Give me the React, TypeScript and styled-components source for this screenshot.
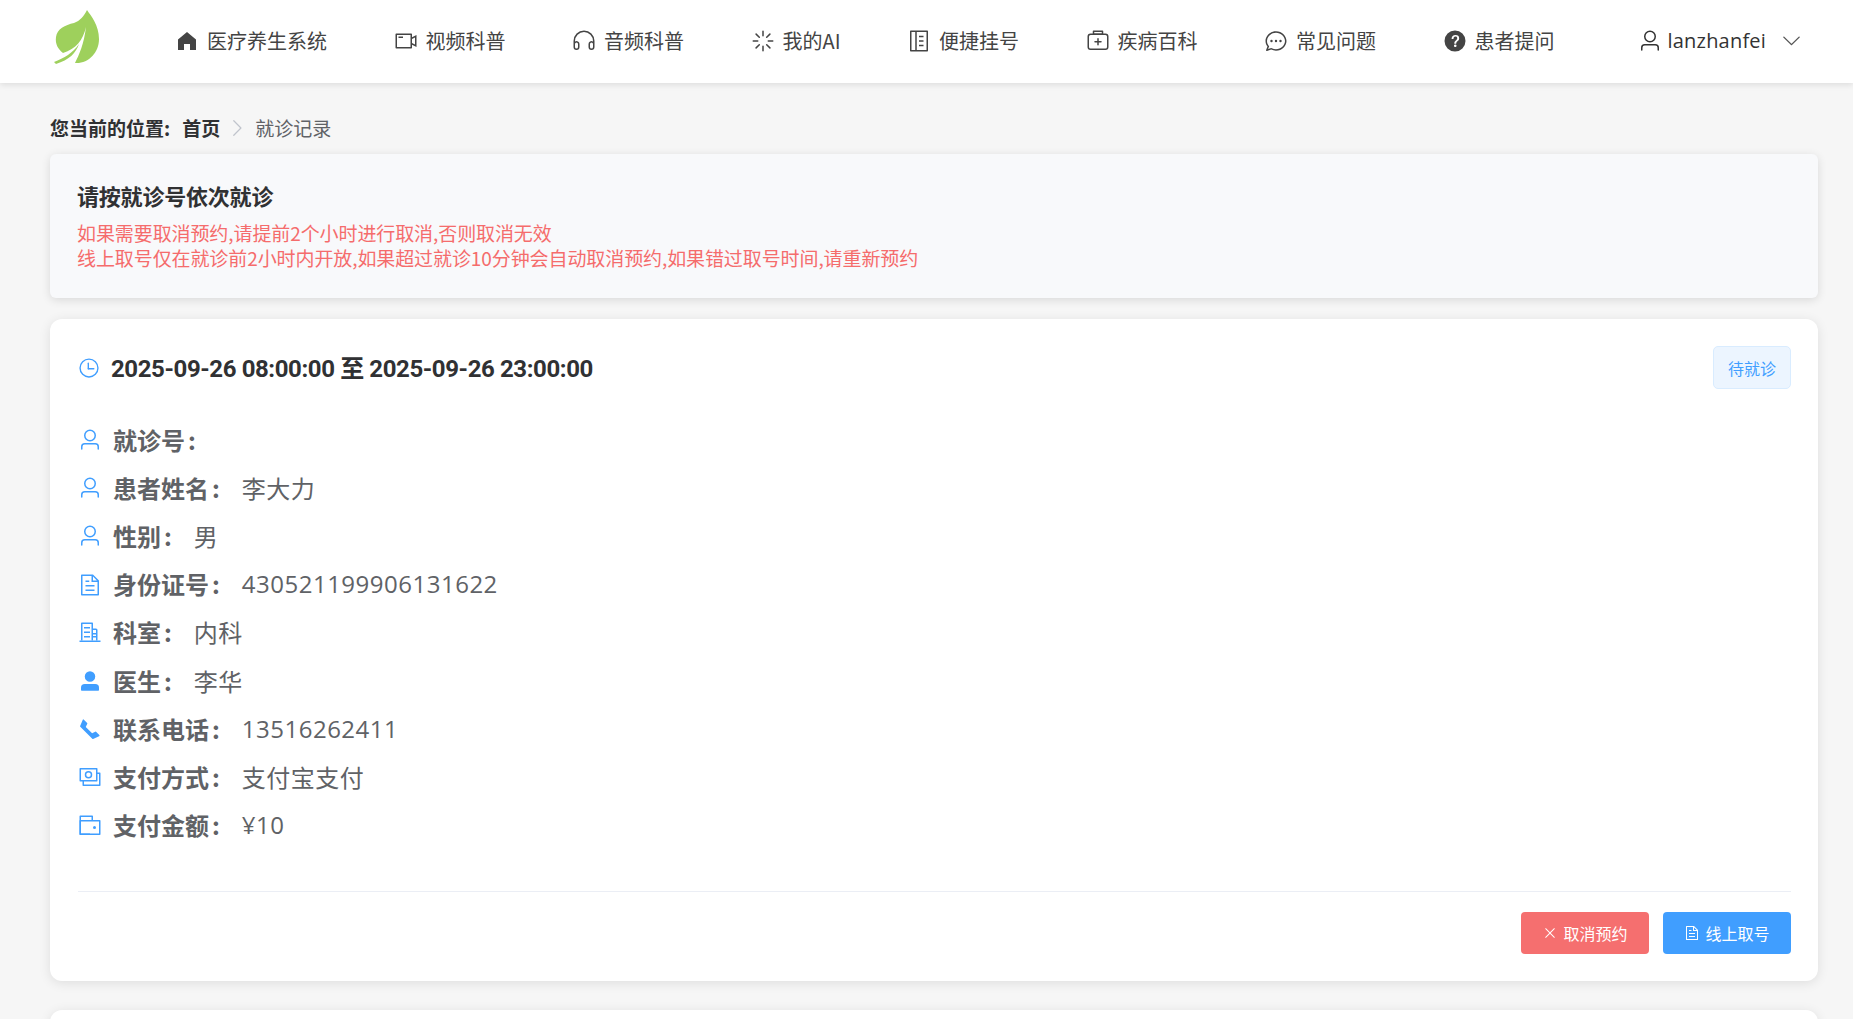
import styled, { createGlobalStyle } from "styled-components"

const GlobalStyle = createGlobalStyle`
    html, body {
        margin: 0;
        height: 100%;
        overflow: hidden;
        background: #f6f6f6;
        font-family: "Noto Sans CJK SC", "Open Sans", sans-serif;
    }
    * { box-sizing: border-box; }
`

const paths = {
    home: ["M512 128 128 447.936V896h255.936V640H640v256h255.936V447.936z"],
    video: ["M704 768V256H128v512zm64-416 192-96v512l-192-96v128a32 32 0 0 1-32 32H96a32 32 0 0 1-32-32V224a32 32 0 0 1 32-32h640a32 32 0 0 1 32 32zm0 71.552v176.896l128 64V359.552zM192 320h192v64H192z"],
    headset: ["M896 529.152V512a384 384 0 1 0-768 0v17.152A128 128 0 0 1 320 640v128a128 128 0 1 1-256 0V512a448 448 0 1 1 896 0v256a128 128 0 1 1-256 0V640a128 128 0 0 1 192-110.848M896 640a64 64 0 0 0-128 0v128a64 64 0 0 0 128 0zm-768 0v128a64 64 0 0 0 128 0V640a64 64 0 1 0-128 0"],
    loading: ["M512 64a32 32 0 0 1 32 32v192a32 32 0 0 1-64 0V96a32 32 0 0 1 32-32m0 640a32 32 0 0 1 32 32v192a32 32 0 1 1-64 0V736a32 32 0 0 1 32-32m448-192a32 32 0 0 1-32 32H736a32 32 0 1 1 0-64h192a32 32 0 0 1 32 32m-640 0a32 32 0 0 1-32 32H96a32 32 0 0 1 0-64h192a32 32 0 0 1 32 32M195.2 195.2a32 32 0 0 1 45.248 0l135.872 135.808a32 32 0 0 1-45.248 45.248L195.2 240.448a32 32 0 0 1 0-45.248zm452.544 452.544a32 32 0 0 1 45.248 0L828.8 783.552a32 32 0 0 1-45.248 45.248L647.744 692.992a32 32 0 0 1 0-45.248zM828.8 195.264a32 32 0 0 1 0 45.184L692.992 376.32a32 32 0 0 1-45.248-45.248l135.808-135.808a32 32 0 0 1 45.248 0m-452.544 452.48a32 32 0 0 1 0 45.248L240.448 828.8a32 32 0 0 1-45.248-45.248l135.808-135.808a32 32 0 0 1 45.248 0z"],
    notebook: ["M192 128v768h640V128zm-32-64h704a32 32 0 0 1 32 32v832a32 32 0 0 1-32 32H160a32 32 0 0 1-32-32V96a32 32 0 0 1 32-32", "M352 96h64v832h-64zM512 288h192v64H512zm0 192h192v64H512zm0 192h192v64H512z"],
    kit: [
        "M192 256a64 64 0 0 0-64 64v448a64 64 0 0 0 64 64h640a64 64 0 0 0 64-64V320a64 64 0 0 0-64-64zm0-64h640a128 128 0 0 1 128 128v448a128 128 0 0 1-128 128H192A128 128 0 0 1 64 768V320a128 128 0 0 1 128-128",
        "M544 512h96a32 32 0 0 1 0 64h-96v96a32 32 0 0 1-64 0v-96h-96a32 32 0 0 1 0-64h96v-96a32 32 0 0 1 64 0zM352 128v64h320v-64zm-32-64h384a32 32 0 0 1 32 32v128a32 32 0 0 1-32 32H320a32 32 0 0 1-32-32V96a32 32 0 0 1 32-32",
    ],
    chat: [
        "m174.72 855.68 135.296-45.12 23.68 11.84C388.096 849.536 448.576 864 512 864c211.84 0 384-166.784 384-352S723.84 160 512 160 128 326.784 128 512c0 69.12 24.96 139.264 70.848 199.232l22.08 28.8-46.272 115.584zm-45.248 82.56A32 32 0 0 1 89.6 896l58.368-145.92C94.72 680.32 64 596.864 64 512 64 299.904 256 96 512 96s448 203.904 448 416-192 416-448 416a461.056 461.056 0 0 1-206.912-48.384l-175.616 58.56z",
        "M512 563.2a51.2 51.2 0 1 1 0-102.4 51.2 51.2 0 0 1 0 102.4m192 0a51.2 51.2 0 1 1 0-102.4 51.2 51.2 0 0 1 0 102.4m-384 0a51.2 51.2 0 1 1 0-102.4 51.2 51.2 0 0 1 0 102.4",
    ],
    question: ["M512 64a448 448 0 1 1 0 896 448 448 0 0 1 0-896m23.744 191.488c-52.096 0-92.928 14.784-123.2 44.352-30.976 29.568-45.76 70.4-45.76 122.496h80.256c0-29.568 5.632-52.8 17.6-68.992 13.376-19.712 35.2-28.864 66.176-28.864 23.936 0 42.944 6.336 56.32 19.712 12.672 13.376 19.712 31.68 19.712 54.912 0 17.6-6.336 34.496-19.008 49.984l-8.448 9.856c-45.76 40.832-73.216 70.4-82.368 89.408-9.856 19.008-14.08 42.24-14.08 68.992v9.856h80.96v-9.856c0-16.896 3.52-31.68 10.56-45.76 6.336-12.672 15.488-24.64 28.16-35.2 33.792-29.568 54.208-48.576 60.544-55.616 16.896-22.528 26.048-51.392 26.048-86.592 0-42.944-14.08-76.736-42.24-101.376-28.16-25.344-65.472-37.312-111.232-37.312zm-12.672 406.208a54.272 54.272 0 0 0-38.72 14.784 49.408 49.408 0 0 0-15.488 38.016c0 15.488 4.928 28.16 15.488 38.016A54.848 54.848 0 0 0 523.072 768c15.488 0 28.16-4.928 38.72-14.784a51.52 51.52 0 0 0 16.192-38.72 51.968 51.968 0 0 0-15.488-38.016 55.936 55.936 0 0 0-39.424-14.784z"],
    user: ["M512 512a192 192 0 1 0 0-384 192 192 0 0 0 0 384m0 64a256 256 0 1 1 0-512 256 256 0 0 1 0 512m320 320v-96a96 96 0 0 0-96-96H288a96 96 0 0 0-96 96v96a32 32 0 1 1-64 0v-96a160 160 0 0 1 160-160h448a160 160 0 0 1 160 160v96a32 32 0 1 1-64 0"],
    arrowDown: ["M831.872 340.864 512 652.672 192.128 340.864a30.592 30.592 0 0 0-42.752 0 29.12 29.12 0 0 0 0 41.6L489.664 714.24a32 32 0 0 0 44.672 0l340.288-331.712a29.12 29.12 0 0 0 0-41.728 30.592 30.592 0 0 0-42.752 0z"],
    arrowRight: ["M340.864 149.312a30.592 30.592 0 0 0 0 42.752L652.736 512 340.864 831.872a30.592 30.592 0 0 0 0 42.752 29.12 29.12 0 0 0 41.728 0L714.24 534.336a32 32 0 0 0 0-44.672L382.592 149.376a29.12 29.12 0 0 0-41.728 0z"],
    clock: [
        "M512 896a384 384 0 1 0 0-768 384 384 0 0 0 0 768m0 64a448 448 0 1 1 0-896 448 448 0 0 1 0 896",
        "M480 256a32 32 0 0 1 32 32v256a32 32 0 0 1-64 0V288a32 32 0 0 1 32-32",
        "M480 512h256q32 0 32 32t-32 32H480q-32 0-32-32t32-32",
    ],
    document: ["M832 384H576V128H192v768h640zm-26.496-64L640 154.496V320zM160 64h480l256 256v608a32 32 0 0 1-32 32H160a32 32 0 0 1-32-32V96a32 32 0 0 1 32-32m160 448h384v64H320zm0-192h160v64H320zm0 384h384v64H320z"],
    office: [
        "M192 128v704h384V128zm-32-64h448a32 32 0 0 1 32 32v736h-512V96a32 32 0 0 1 32-32",
        "M256 256h256v64H256zm0 192h256v64H256zm0 192h256v64H256zm384-128h128v64H640zm0 128h128v64H640zM768 384H640v-64h128a64 64 0 0 1 64 64v448h-64z",
        "M64 832h896v64H64z",
    ],
    userFilled: ["M288 320a224 224 0 1 0 448 0 224 224 0 1 0-448 0m544 608H160a32 32 0 0 1-32-32v-96a160 160 0 0 1 160-160h448a160 160 0 0 1 160 160v96a32 32 0 0 1-32 32z"],
    phone: ["M199.232 125.568 90.624 379.008a32 32 0 0 0 6.784 35.2l512.384 512.384a32 32 0 0 0 35.2 6.784l253.44-108.608a32 32 0 0 0 10.048-52.032L769.6 633.92a32 32 0 0 0-36.928-5.952l-130.176 65.088-271.488-271.552 65.024-130.176a32 32 0 0 0-5.952-36.928L251.2 115.52a32 32 0 0 0-51.968 10.048z"],
    money: [
        "M256 640v192h640V384H768v-64h150.976c14.272 0 19.456 1.472 24.64 4.288a29.056 29.056 0 0 1 12.16 12.096c2.752 5.184 4.224 10.368 4.224 24.64v493.952c0 14.272-1.472 19.456-4.288 24.64a29.056 29.056 0 0 1-12.096 12.16c-5.184 2.752-10.368 4.224-24.64 4.224H233.024c-14.272 0-19.456-1.472-24.64-4.288a29.056 29.056 0 0 1-12.16-12.096c-2.688-5.184-4.224-10.368-4.224-24.576V640z",
        "M768 192H128v448h640zm64-22.976v493.952c0 14.272-1.472 19.456-4.288 24.64a29.056 29.056 0 0 1-12.096 12.16c-5.184 2.752-10.368 4.224-24.64 4.224H105.024c-14.272 0-19.456-1.472-24.64-4.288a29.056 29.056 0 0 1-12.16-12.096C65.536 682.432 64 677.248 64 663.04V169.024c0-14.272 1.472-19.456 4.288-24.64a29.056 29.056 0 0 1 12.096-12.16C85.568 129.536 90.752 128 104.96 128h685.952c14.272 0 19.456 1.472 24.64 4.288a29.056 29.056 0 0 1 12.16 12.096c2.752 5.184 4.224 10.368 4.224 24.64z",
        "M448 576a160 160 0 1 1 0-320 160 160 0 0 1 0 320m0-64a96 96 0 1 0 0-192 96 96 0 0 0 0 192",
    ],
    wallet: [
        "M640 288h-64V128H128v704h384v32a32 32 0 0 0 32 32H96a32 32 0 0 1-32-32V96a32 32 0 0 1 32-32h512a32 32 0 0 1 32 32z",
        "M128 320v512h768V320zm-32-64h832a32 32 0 0 1 32 32v576a32 32 0 0 1-32 32H96a32 32 0 0 1-32-32V288a32 32 0 0 1 32-32",
        "M704 640a64 64 0 1 1 0-128 64 64 0 0 1 0 128",
    ],
    close: ["M764.288 214.592 512 466.88 259.712 214.592a31.936 31.936 0 0 0-45.12 45.12L466.752 512 214.528 764.224a31.936 31.936 0 1 0 45.12 45.184L512 557.184l252.288 252.288a31.936 31.936 0 0 0 45.12-45.12L557.12 512.064l252.288-252.352a31.936 31.936 0 1 0-45.12-45.184z"],
}

type IconName = keyof typeof paths

const IconSvg = styled.svg<{ $size: number }>`
    width: ${props => props.$size}px;
    height: ${props => props.$size}px;
    flex-shrink: 0;
    fill: currentColor;
`

const Icon = (props: { name: IconName, size: number }) => (
    <IconSvg $size={props.size} viewBox="0 0 1024 1024">
        {paths[props.name].map(d => <path key={d} d={d} />)}
    </IconSvg>
)

const Header = styled.header`
    display: flex;
    align-items: center;
    height: 83px;
    padding: 0 0 2px 54px;
    background: #fff;
    box-shadow: 0 2px 6px rgba(0, 0, 0, 0.1);
`

const Logo = styled.svg`
    width: 46px;
    height: 54px;
    margin: 0 75px 7px 0;
    flex-shrink: 0;
`

const NavList = styled.nav`
    display: flex;
    align-items: center;
    gap: 66.5px;
`

const NavItem = styled.a`
    display: flex;
    align-items: center;
    gap: 8px;
    font-size: 20px;
    color: #444;
    white-space: nowrap;
`

const UserMenu = styled.div`
    display: flex;
    align-items: center;
    margin-left: 83px;
    gap: 6px;
    font-family: "Open Sans", "Noto Sans CJK SC", sans-serif;
    font-size: 20px;
    letter-spacing: 0.2px;
    color: #333;
`

const UserCaret = styled.span`
    display: flex;
    margin-left: 8px;
    color: #555;
`

const Main = styled.main`
    padding: 0 35px 0 50px;
`

const Breadcrumb = styled.div`
    display: flex;
    align-items: center;
    height: 71px;
    padding-top: 18px;
    font-size: 19px;
`

const CrumbLabel = styled.span`
    font-weight: 700;
    color: #303133;
    margin-right: 12px;
`

const CrumbLink = styled.span`
    font-weight: 700;
    color: #303133;
`

const CrumbSeparator = styled.span`
    display: flex;
    margin: 0 7px 0 6px;
    color: #c0c4cc;
`

const CrumbCurrent = styled.span`
    color: #606266;
`

const Notice = styled.section`
    height: 144px;
    padding: 24px 27px;
    background: #f8f9fb;
    border-radius: 6px;
    box-shadow: 0 2px 10px rgba(0, 0, 0, 0.12);
`

const NoticeTitle = styled.h3`
    margin: 0 0 8px;
    font-size: 22px;
    line-height: 34px;
    letter-spacing: -0.2px;
    font-weight: 700;
    color: #303133;
`

const NoticeText = styled.p`
    margin: 0;
    font-size: 19px;
    line-height: 25px;
    letter-spacing: -0.09px;
    color: #f56c6c;
`

const Card = styled.section`
    height: 662px;
    margin-top: 21px;
    padding: 27px 27px 27px 28px;
    background: #fff;
    border-radius: 12px;
    box-shadow: 0 2px 12px rgba(0, 0, 0, 0.1);
`

const NextCard = styled(Card)`
    margin-top: 29px;
    height: 200px;
`

const CardHead = styled.div`
    display: flex;
    align-items: center;
    justify-content: space-between;
    height: 43px;
    margin-bottom: 26px;
`

const CardTime = styled.div`
    display: flex;
    align-items: center;
    gap: 11px;
    font-family: Roboto, "Noto Sans CJK SC", sans-serif;
    font-size: 24px;
    font-weight: 700;
    color: #303133;
`

const TimeIcon = styled.span`
    display: flex;
    color: #409eff;
`

const TimeText = styled.span`
    margin-bottom: 2px;
    letter-spacing: -0.4px;
`

const StatusTag = styled.span`
    display: flex;
    align-items: center;
    justify-content: center;
    width: 78px;
    height: 43px;
    font-size: 16px;
    color: #409eff;
    background: #ecf5ff;
    border: 1px solid #d9ecff;
    border-radius: 5px;
`

const Rows = styled.div`
    display: flex;
    flex-direction: column;
    height: 476px;
`

const Row = styled.div`
    display: flex;
    align-items: center;
    height: 48.2px;
    font-size: 24px;
    color: #606266;
`

const RowIcon = styled.span`
    display: flex;
    margin: 2px 11px 0 0;
    color: #409eff;
`

const RowLabel = styled.span`
    font-weight: 700;
    margin-right: 22px;
`

const RowColon = styled.span`
    margin-left: 3px;
`

const RowValue = styled.span`
    font-family: "Open Sans", "Noto Sans CJK SC", sans-serif;
    letter-spacing: 0.5px;
`

const CardFoot = styled.div`
    display: flex;
    justify-content: flex-end;
    gap: 14px;
    padding-top: 20px;
    border-top: 1px solid #ebeef5;
`

const ActionButton = styled.button<{ $tone: 'danger' | 'primary' }>`
    display: flex;
    align-items: center;
    justify-content: center;
    gap: 5px;
    width: 128px;
    height: 42px;
    padding: 0;
    font: inherit;
    font-size: 16px;
    color: #fff;
    border: none;
    border-radius: 4px;
    background: ${props => props.$tone === 'danger' ? '#f56f6f' : '#409eff'};
`

const navItems: { icon: IconName, label: string, size: number }[] = [
    { icon: "home", label: "医疗养生系统", size: 24 },
    { icon: "video", label: "视频科普", size: 24 },
    { icon: "headset", label: "音频科普", size: 24 },
    { icon: "loading", label: "我的AI", size: 24 },
    { icon: "notebook", label: "便捷挂号", size: 24 },
    { icon: "kit", label: "疾病百科", size: 24 },
    { icon: "chat", label: "常见问题", size: 24 },
    { icon: "question", label: "患者提问", size: 24 },
]

const rows: { icon: IconName, label: string, value?: string }[] = [
    { icon: "user", label: "就诊号" },
    { icon: "user", label: "患者姓名", value: "李大力" },
    { icon: "user", label: "性别", value: "男" },
    { icon: "document", label: "身份证号", value: "430521199906131622" },
    { icon: "office", label: "科室", value: "内科" },
    { icon: "userFilled", label: "医生", value: "李华" },
    { icon: "phone", label: "联系电话", value: "13516262411" },
    { icon: "money", label: "支付方式", value: "支付宝支付" },
    { icon: "wallet", label: "支付金额", value: "¥10" },
]

export default function App() {
    return (
        <>
            <GlobalStyle />
            <Header>
                <Logo viewBox="0 0 46 54">
                    <path fill="#9ed05c" d="M33 0C37 6 45 15 45 29C45 43 34 54 21 53C25 45 30 34 32 17C29 30 22 39 9 43C4 39 1 34 2 27C3 19 11 15 20 13C26 11 30 6 33 0Z" />
                    <path fill="#9ed05c" d="M0 52C10 48 19 43 25 34C22 43 15 50 2 54Z" />
                </Logo>
                <NavList>
                    {navItems.map(item => (
                        <NavItem key={item.label}>
                            <Icon name={item.icon} size={item.size} />
                            {item.label}
                        </NavItem>
                    ))}
                </NavList>
                <UserMenu>
                    <Icon name="user" size={24} />
                    lanzhanfei
                    <UserCaret><Icon name="arrowDown" size={23} /></UserCaret>
                </UserMenu>
            </Header>
            <Main>
                <Breadcrumb>
                    <CrumbLabel>您当前的位置:</CrumbLabel>
                    <CrumbLink>首页</CrumbLink>
                    <CrumbSeparator><Icon name="arrowRight" size={22} /></CrumbSeparator>
                    <CrumbCurrent>就诊记录</CrumbCurrent>
                </Breadcrumb>
                <Notice>
                    <NoticeTitle>请按就诊号依次就诊</NoticeTitle>
                    <NoticeText>如果需要取消预约,请提前2个小时进行取消,否则取消无效</NoticeText>
                    <NoticeText>线上取号仅在就诊前2小时内开放,如果超过就诊10分钟会自动取消预约,如果错过取号时间,请重新预约</NoticeText>
                </Notice>
                <Card>
                    <CardHead>
                        <CardTime>
                            <TimeIcon><Icon name="clock" size={22} /></TimeIcon>
                            <TimeText>2025-09-26 08:00:00 至 2025-09-26 23:00:00</TimeText>
                        </CardTime>
                        <StatusTag>待就诊</StatusTag>
                    </CardHead>
                    <Rows>
                        {rows.map(row => (
                            <Row key={row.label}>
                                <RowIcon><Icon name={row.icon} size={24} /></RowIcon>
                                <RowLabel>{row.label}<RowColon>:</RowColon></RowLabel>
                                {row.value && <RowValue>{row.value}</RowValue>}
                            </Row>
                        ))}
                    </Rows>
                    <CardFoot>
                        <ActionButton $tone="danger"><Icon name="close" size={16} />取消预约</ActionButton>
                        <ActionButton $tone="primary"><Icon name="document" size={16} />线上取号</ActionButton>
                    </CardFoot>
                </Card>
                <NextCard />
            </Main>
        </>
    )
}
